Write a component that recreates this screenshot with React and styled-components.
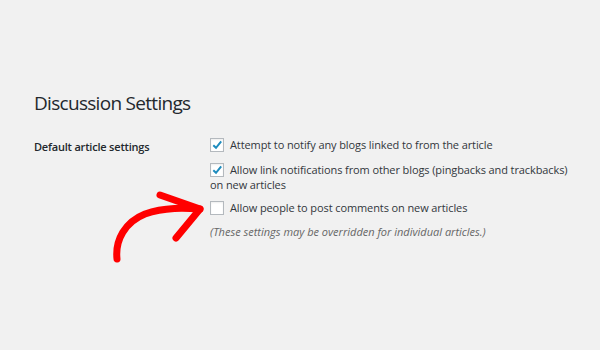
import React from 'react';
import styled, { createGlobalStyle } from 'styled-components';

const GlobalStyle = createGlobalStyle`
  html, body {
    margin: 0;
    padding: 0;
    background: #f1f1f1;
  }
  body {
    font-family: "Open Sans", "Noto Sans", sans-serif;
    color: #23282d;
  }
`;

const Page = styled.div`
  position: relative;
  width: 600px;
  height: 350px;
  padding: 90px 0 0 34px;
  box-sizing: border-box;
  overflow: hidden;
`;

const Title = styled.h1`
  margin: 0 0 21px;
  font-size: 19px;
  font-weight: 400;
  line-height: 26px;
  letter-spacing: -0.7px;
  color: #23282d;
`;

const FormRow = styled.div`
  display: grid;
  grid-template-columns: 176px 1fr;
`;

const Label = styled.div`
  font-size: 11px;
  font-weight: 600;
  line-height: 15px;
  letter-spacing: -0.2px;
  padding-top: 2px;
`;

const Fields = styled.div`
  display: flex;
  flex-direction: column;
  width: 362px;
`;

const Option = styled.label`
  display: block;
  margin-bottom: ${(p) => p.$space}px;
  font-size: 11px;
  line-height: 15px;
  letter-spacing: -0.1px;
  color: #32373c;
`;

const Box = styled.span`
  display: inline-block;
  vertical-align: -3px;
  width: 12px;
  height: 12px;
  margin-right: 6px;
  border: 1px solid #b4b9be;
  background: #fff;
  box-shadow: inset 0 1px 2px rgba(0, 0, 0, 0.07);
  position: relative;
  svg {
    position: absolute;
    left: 0;
    top: 0;
  }
`;

const Note = styled.p`
  margin: 0;
  font-size: 11px;
  line-height: 15px;
  font-style: italic;
  color: #666;
`;

const Arrow = styled.svg`
  position: absolute;
  left: 100px;
  top: 185px;
`;

const Check = ({ checked }) => (
  <Box>
    {checked && (
      <svg width="12" height="12" viewBox="0 0 12 12">
        <path d="M2.3 6.2 L5 8.8 L10.2 2.4" fill="none" stroke="#1e8cbe" strokeWidth="2" />
      </svg>
    )}
  </Box>
);

const App = () => (
  <Page>
    <GlobalStyle />
    <Title>Discussion Settings</Title>
    <FormRow>
      <Label>Default article settings</Label>
      <Fields>
        <Option $space={10}>
          <Check checked />
          Attempt to notify any blogs linked to from the article
        </Option>
        <Option $space={8}>
          <Check checked />
          Allow link notifications from other blogs (pingbacks and trackbacks) on new articles
        </Option>
        <Option $space={9}>
          <Check />
          Allow people to post comments on new articles
        </Option>
        <Note>(These settings may be overridden for individual articles.)</Note>
      </Fields>
    </FormRow>
    <Arrow width="110" height="80" viewBox="100 185 110 80">
      <path
        d="M117 259 C115 240 125 222 145 214 C165 207 185 208 200 209"
        fill="none"
        stroke="#f00"
        strokeWidth="7"
        strokeLinecap="round"
      />
      <path
        d="M160 195 L200 209 L176 238"
        fill="none"
        stroke="#f00"
        strokeWidth="7"
        strokeLinecap="round"
        strokeLinejoin="round"
      />
    </Arrow>
  </Page>
);

export default App;
